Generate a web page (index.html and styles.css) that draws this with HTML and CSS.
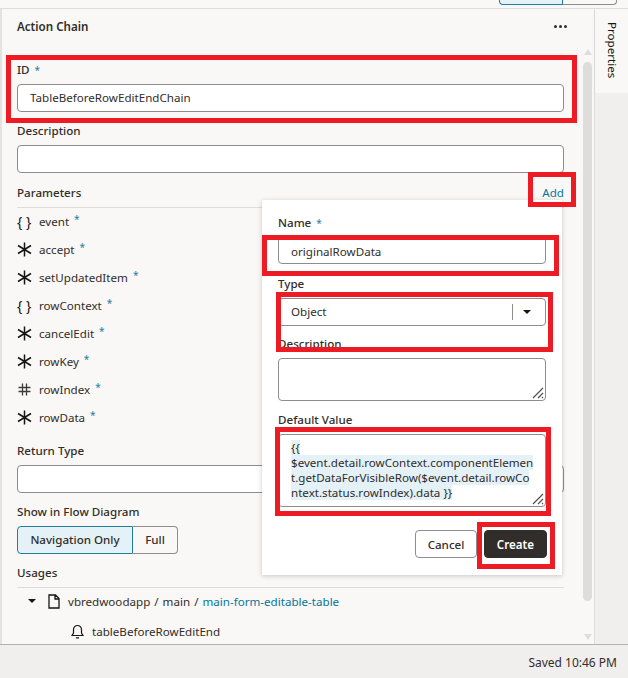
FILE: index.html
```html
<!DOCTYPE html>
<html lang="en">
<head>
  <meta charset="UTF-8" />
  <title>Action Chain</title>
  <link rel="stylesheet" href="styles.css">
</head>
<body>

<svg class="defs" width="0" height="0">
  <symbol id="ic-any" viewBox="0 0 15 15">
    <path d="M7.5 .5v14M1 3.5l13 8M14 3.5l-13 8" fill="none" stroke="#161513" stroke-width="1.5"/>
  </symbol>
  <symbol id="ic-num" viewBox="0 0 15 15">
    <path d="M5.5 1.5v12M9.5 1.5v12M1.5 5.5h12M1.5 9.5h12" fill="none" stroke="#3f3b38" stroke-width="1.3"/>
  </symbol>
  <symbol id="ic-grip" viewBox="0 0 12 12">
    <path d="M1 11L11 1M6 11l5-5M10 11l1-1" fill="none" stroke="#55514d" stroke-width="1.2"/>
  </symbol>
</svg>

<div class="topbar">
  <div class="topbar-btn on"></div>
  <div class="topbar-btn"></div>
</div>

<div class="main">
  <div class="panel">
    <div class="content">
      <div class="head">
        <h2>Action Chain</h2>
        <span class="dots"><i></i><i></i><i></i></span>
      </div>

      <div class="field">
        <label>ID <b>*</b></label>
        <div class="input">TableBeforeRowEditEndChain</div>
      </div>
      <div class="field">
        <label>Description</label>
        <div class="input"></div>
      </div>

      <div class="section">
        <span>Parameters</span>
        <a class="add">Add</a>
      </div>
      <ul class="params">
        <li><span class="ptype brace">{ }</span>event <b>*</b></li>
        <li><svg class="ptype"><use href="#ic-any"/></svg>accept <b>*</b></li>
        <li><svg class="ptype"><use href="#ic-any"/></svg>setUpdatedItem <b>*</b></li>
        <li><span class="ptype brace">{ }</span>rowContext <b>*</b></li>
        <li><svg class="ptype"><use href="#ic-any"/></svg>cancelEdit <b>*</b></li>
        <li><svg class="ptype"><use href="#ic-any"/></svg>rowKey <b>*</b></li>
        <li><svg class="ptype"><use href="#ic-num"/></svg>rowIndex <b>*</b></li>
        <li><svg class="ptype"><use href="#ic-any"/></svg>rowData <b>*</b></li>
      </ul>

      <div class="field return-type">
        <label>Return Type</label>
        <div class="input"></div>
      </div>

      <div class="flow">
        <label>Show in Flow Diagram</label>
        <div class="toggle">
          <span class="on">Navigation Only</span>
          <span>Full</span>
        </div>
      </div>

      <div class="section usages"><span>Usages</span></div>
      <div class="tree-row first">
        <span class="caret"></span>
        <svg class="doc" width="12" height="15" viewBox="0 0 12 15">
          <path d="M1 1h6.5L11 4.5V14H1zM7 1v4h4" fill="none" stroke="#161513" stroke-width="1.3"/>
        </svg>
        <span class="crumbs">vbredwoodapp / main / <a>main-form-editable-table</a></span>
      </div>
      <div class="tree-row second">
        <svg class="bell" width="13" height="15" viewBox="0 0 13 15">
          <path d="M1 11.5h11L10.5 9V5.5a4 4 0 0 0-8 0V9zM5 13.8h3" fill="none" stroke="#161513" stroke-width="1.2"/>
        </svg>
        <span>tableBeforeRowEditEnd</span>
      </div>
    </div>

    <div class="scrollbar">
      <span class="arrow up"></span>
      <span class="thumb"></span>
      <span class="arrow down"></span>
    </div>
  </div>

  <div class="side">
    <div class="side-tab"><span>Properties</span></div>
    <div class="side-rest"></div>
  </div>
</div>

<div class="status">Saved 10:46 PM</div>

<!-- popup over the parameters list -->
<div class="popup">
  <div class="pfield p-name">
    <label>Name <b>*</b></label>
    <div class="input">originalRowData</div>
  </div>
  <div class="pfield p-type">
    <label>Type</label>
    <div class="input select">
      <span class="select-val">Object</span>
      <span class="select-btn"><span class="caret small"></span></span>
    </div>
  </div>
  <div class="pfield">
    <label>Description</label>
    <div class="input area desc">
      <svg class="grip"><use href="#ic-grip"/></svg>
    </div>
  </div>
  <div class="pfield">
    <label>Default Value</label>
    <div class="input area value">
      <span class="sel">{{ </span><br>
      <span class="sel">$event.detail.rowContext.componentElemen</span><br>
      <span class="sel">t.getDataForVisibleRow($event.detail.rowCo</span><br>
      <span class="sel">ntext.status.rowIndex).data }}</span>
      <svg class="grip"><use href="#ic-grip"/></svg>
    </div>
  </div>
  <div class="actions">
    <button class="btn">Cancel</button>
    <button class="btn primary">Create</button>
  </div>
</div>

<!-- red annotation boxes -->
<div class="mark m-id"></div>
<div class="mark m-add"></div>
<div class="mark m-name"></div>
<div class="mark m-type"></div>
<div class="mark m-value"></div>
<div class="mark m-create"></div>

</body>
</html>
```

FILE: styles.css
```css
* {
  box-sizing: border-box;
}

html, body {
  height: 100%;
}

body {
  margin: 0;
  height: 678px;
  overflow: hidden;
  position: relative;
  display: flex;
  flex-direction: column;
  font-family: "Noto Sans", Arial, sans-serif;
  font-size: 11.6px;
  color: #312d2a;
  background-color: #f9f8f6;
}

.defs {
  position: absolute;
}

label {
  display: block;
  height: 16px;
  line-height: 16px;
  margin-bottom: 6px;
  font-weight: 500;
}

label b, .params b {
  color: #227e9e;
  font-size: 10px;
  font-weight: 400;
  margin-left: 2px;
}

a {
  color: #04769a;
}

/* top strip */
.topbar {
  height: 9px;
  flex: none;
  display: flex;
  justify-content: flex-end;
  align-items: flex-start;
  padding-right: 11px;
  border-bottom: 1px solid #dfdddb;
}

.topbar-btn {
  width: 54px;
  height: 5px;
  border: 1px solid #8f8c89;
  border-top: none;
  border-left: none;
  border-radius: 0 0 4px 0;
}

.topbar-btn.on {
  width: 64px;
  background-color: #e4f1f7;
  border: 1px solid #227e9e;
  border-top: none;
  border-radius: 0 0 0 4px;
}

.main {
  flex: 1;
  display: flex;
  min-height: 0;
}

.panel {
  width: 595px;
  flex: none;
  display: flex;
  border-left: 2px solid #e4e2df;
  border-right: 1px solid #dfdddb;
}

.content {
  width: 547px;
  margin-left: 15px;
}

.head {
  display: flex;
  justify-content: space-between;
  align-items: center;
  height: 16px;
  margin-top: 9px;
  margin-bottom: 28px;
}

.head h2 {
  margin: 0;
  font-size: 11.6px;
  font-weight: 600;
}

.dots {
  display: flex;
  gap: 2px;
  margin-right: -3px;
}

.dots i {
  width: 3px;
  height: 3px;
  border-radius: 50%;
  background-color: #312d2a;
}

.field {
  margin-bottom: 11px;
}

.input {
  height: 28px;
  line-height: 26px;
  padding: 0 12px;
  background-color: #fff;
  border: 1px solid #8f8c89;
  border-radius: 4px;
}

.section {
  display: flex;
  justify-content: space-between;
  height: 24px;
  line-height: 17px;
  font-weight: 500;
  border-bottom: 1px solid #dfdddb;
}

.add {
  font-weight: 400;
}

.params {
  list-style: none;
  margin: 0;
  padding: 0;
}

.params li {
  display: flex;
  align-items: center;
  height: 28px;
  padding-bottom: 2px;
}

.params b {
  margin-left: 5px;
  margin-top: -4px;
}

.ptype {
  width: 15px;
  height: 15px;
  margin-right: 7px;
  flex: none;
}

.brace {
  font-size: 14px;
  line-height: 15px;
  color: #161513;
  white-space: nowrap;
}

.return-type {
  margin-top: 11px;
}

.flow label {
  line-height: 15px;
  margin-bottom: 6px;
}

.toggle {
  display: inline-flex;
  height: 28px;
  line-height: 26px;
  font-weight: 500;
}

.toggle span {
  width: 45px;
  text-align: center;
  border: 1px solid #8f8c89;
  border-left: none;
  border-radius: 0 4px 4px 0;
}

.toggle .on {
  width: 116px;
  background-color: #e4f1f7;
  border: 1px solid #227e9e;
  border-radius: 4px 0 0 4px;
}

.usages {
  margin-top: 11px;
  height: 23px;
  line-height: 15px;
}

.tree-row {
  display: flex;
  align-items: center;
  height: 16px;
}

.tree-row.first {
  margin-top: 5px;
  padding-left: 11px;
}

.tree-row.second {
  margin-top: 14px;
  padding-left: 54px;
}

.crumbs {
  word-spacing: 1px;
}

.caret {
  width: 0;
  height: 0;
  border-left: 4px solid transparent;
  border-right: 4px solid transparent;
  border-top: 4px solid #161513;
}

.doc {
  margin-left: 12px;
  margin-right: 8px;
}

.bell {
  margin-right: 8px;
}

.scrollbar {
  width: 9px;
  margin-left: 19px;
  padding: 40px 0 4px;
  display: flex;
  flex-direction: column;
  align-items: center;
}

.arrow {
  flex: none;
  width: 0;
  height: 0;
  border-left: 4.5px solid transparent;
  border-right: 4.5px solid transparent;
}

.arrow.up {
  border-bottom: 6px solid #dfdddb;
  margin-bottom: 7px;
}

.arrow.down {
  border-top: 6px solid #dfdddb;
  margin-top: 33px;
}

.thumb {
  flex: 1;
  width: 9px;
  background-color: #dfdddb;
  border-radius: 5px;
}

/* right side tabs */
.side {
  flex: 1;
  display: flex;
  flex-direction: column;
}

.side-tab {
  height: 84px;
  padding: 13px 0 0 9px;
  box-shadow: 0 2px 3px rgba(0, 0, 0, 0.06);
}

.side-tab span {
  display: block;
  writing-mode: vertical-rl;
  line-height: 16px;
  color: #161513;
}

.side-rest {
  flex: 1;
  background-color: #f1efed;
}

.status {
  height: 34px;
  flex: none;
  padding-right: 11px;
  font-size: 12px;
  line-height: 35px;
  text-align: right;
  background-color: #f1efed;
  border-top: 1px solid #b5b3b0;
}

/* popup */
.popup {
  position: absolute;
  left: 262px;
  top: 200px;
  width: 300px;
  height: 375px;
  padding: 15px 16px 0;
  background-color: #fff;
  box-shadow: 0 1px 5px rgba(0, 0, 0, 0.2);
}

.pfield {
  margin-bottom: 11px;
}

.p-name {
  margin-bottom: 12px;
}

.p-name label {
  margin-bottom: 5px;
}

.p-name .input {
  padding-top: 2px;
}

.p-type {
  margin-bottom: 10px;
}

.select {
  display: flex;
  padding-right: 0;
}

.select-val {
  flex: 1;
}

.select-btn {
  width: 33px;
  height: 16px;
  margin-top: 5px;
  padding-right: 5px;
  display: flex;
  align-items: center;
  justify-content: center;
  border-left: 1px solid #8f8c89;
}

.area {
  position: relative;
  line-height: 15px;
  padding-top: 5px;
}

.desc {
  height: 43px;
}

.value {
  height: 73px;
}

.sel {
  background-color: #e4f1f7;
}

.grip {
  position: absolute;
  right: 1px;
  bottom: 1px;
  width: 12px;
  height: 12px;
}

.actions {
  display: flex;
  justify-content: flex-end;
  gap: 7px;
  margin-top: 23px;
  margin-right: -1px;
}

.btn {
  width: 62px;
  height: 28px;
  padding: 0;
  font: inherit;
  font-weight: 500;
  color: #312d2a;
  background-color: #fff;
  border: 1px solid #8f8c89;
  border-radius: 4px;
}

.btn.primary {
  width: 63px;
  color: #fff;
  font-weight: 600;
  background-color: #312d2a;
  border-color: #312d2a;
}

/* red annotations */
.mark {
  position: absolute;
  border: 5px solid #ed1c24;
}

.m-id {
  left: 6px;
  top: 55px;
  width: 571px;
  height: 68px;
}

.m-add {
  left: 528px;
  top: 172px;
  width: 48px;
  height: 35px;
}

.m-name {
  left: 262px;
  top: 235px;
  width: 297px;
  height: 41px;
}

.m-type {
  left: 276px;
  top: 292px;
  width: 277px;
  height: 60px;
}

.m-value {
  left: 275px;
  top: 427px;
  width: 276px;
  height: 89px;
}

.m-create {
  left: 477px;
  top: 522px;
  width: 78px;
  height: 47px;
}
```
